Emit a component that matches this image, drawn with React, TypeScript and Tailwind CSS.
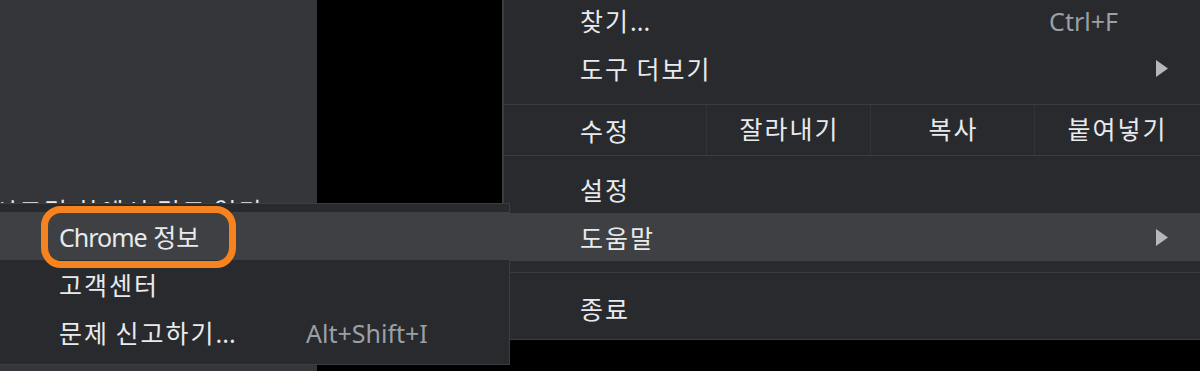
import React from "react";

const FONT = '"Noto Sans", "Noto Sans CJK KR", sans-serif';

// Hangul runs get a little extra tracking so they open up like the reference
const Txt = ({ t }: { t: string }) => (
  <>
    {t.split(/([\uAC00-\uD7A3]+)/).map((s, i) =>
      /[\uAC00-\uD7A3]/.test(s) ? (
        <span key={i} className="tracking-[2px]">
          {s}
        </span>
      ) : (
        <React.Fragment key={i}>{s}</React.Fragment>
      )
    )}
  </>
);

const Arrow = () => (
  <svg width="12" height="17" viewBox="0 0 12 17" className="shrink-0">
    <polygon points="0,0 12,8.5 0,17" fill="#b4b7bb" />
  </svg>
);

const MenuRow = ({
  label,
  shortcut,
  arrow,
  active,
  className = "",
}: {
  label: string;
  shortcut?: string;
  arrow?: boolean;
  active?: boolean;
  className?: string;
}) => (
  <div
    className={`flex h-12 items-center pl-[76px] ${
      active ? "bg-[#3f4043]" : ""
    } ${className}`}
  >
    <span className="flex-1 whitespace-nowrap pt-[3px]">
      <Txt t={label} />
    </span>
    {shortcut && (
      <span className="pr-[82px] pt-[3px] text-[#9aa0a6]">{shortcut}</span>
    )}
    {arrow && (
      <span className="pr-[32px]">
        <Arrow />
      </span>
    )}
  </div>
);

const EditRow = () => (
  <div className="mt-3 flex h-[52px] border-y border-[#3a3b3e]">
    <div className="flex w-[202px] items-center pl-[76px] pt-[3px]">
      <Txt t="수정" />
    </div>
    {["잘라내기", "복사", "붙여넣기"].map((t) => (
      <div
        key={t}
        className="flex w-[164px] items-center justify-center border-l border-[#333437] pb-[2px] pl-[2px]"
      >
        <Txt t={t} />
      </div>
    ))}
  </div>
);

const SubMenu = () => (
  <div className="absolute -left-[2px] top-[203px] w-[512px] border border-[#3c3d40] bg-[#292a2d] py-2">
    <div className="relative flex h-12 items-center bg-[#3f4043] pl-[60px]">
      <span className="whitespace-nowrap pt-[3px]">
        <span className="tracking-[-1px]">Chrome</span> 정보
      </span>
      <div className="absolute left-[42px] top-[-6px] h-[62px] w-[195px] rounded-[20px] border-[7px] border-[#f7831f]" />
    </div>
    <div className="flex h-12 items-center pl-[60px]">
      <span className="pt-[3px]">
        <Txt t="고객센터" />
      </span>
    </div>
    <div className="flex h-12 items-center pl-[60px]">
      <span className="w-[247px] whitespace-nowrap pt-[3px]">
        <Txt t="문제 신고하기..." />
      </span>
      <span className="pt-[3px] text-[#9aa0a6]">Alt+Shift+I</span>
    </div>
  </div>
);

export default function App() {
  return (
    <div
      className="relative flex h-[371px] w-[1200px] overflow-hidden bg-black text-[25px] leading-none text-[#e8eaed]"
      style={{ fontFamily: FONT }}
    >
      <div className="h-full w-[317px] shrink-0 overflow-hidden bg-[#35363a] pt-[199px]">
        <div className="-ml-[6px] whitespace-nowrap">
          <Txt t="시크릿 창에서 링크 열기" />
        </div>
      </div>
      <div className="w-[185px] shrink-0 bg-black" />
      <div className="h-[340px] flex-1 self-start border-b border-l-2 border-[#3c3d40] bg-[#292a2d]">
        <MenuRow label="찾기..." shortcut="Ctrl+F" className="-mt-1" />
        <MenuRow label="도구 더보기" arrow />
        <EditRow />
        <div className="h-[9px]" />
        <MenuRow label="설정" />
        <MenuRow label="도움말" arrow active />
        <div className="my-[11px] h-px bg-[#3a3b3e]" />
        <MenuRow label="종료" />
      </div>
      <SubMenu />
    </div>
  );
}
